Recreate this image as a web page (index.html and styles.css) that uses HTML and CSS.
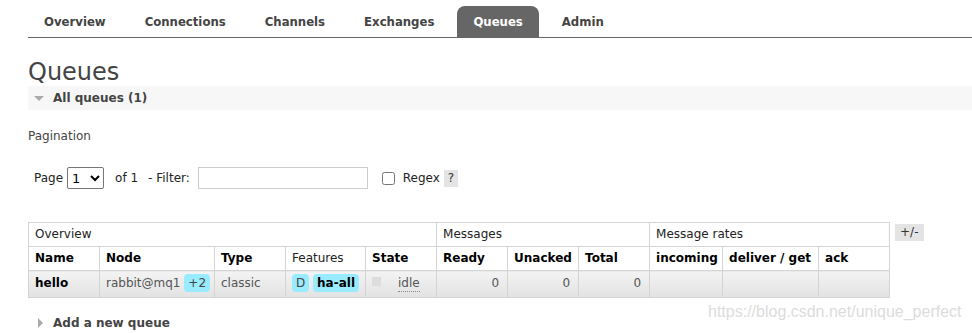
FILE: index.html
```html
<!DOCTYPE html>
<html>

<head>
    <meta charset="utf-8">
    <title>RabbitMQ Management - Queues</title>
    <link rel="stylesheet" href="styles.css">
</head>

<body>
    <div id="principal">
        <ul id="menu">
            <li><a>Overview</a></li>
            <li><a>Connections</a></li>
            <li><a>Channels</a></li>
            <li><a>Exchanges</a></li>
            <li><a class="ativo">Queues</a></li>
            <li><a>Admin</a></li>
        </ul>

        <div id="conteudo">
            <h1 id="titulo">Queues</h1>

            <div class="secao">
                <span class="seta-baixo"></span>
                <span class="secao-titulo">All queues (1)</span>
            </div>

            <div id="paginacao">
                <h3>Pagination</h3>
                <div class="filtro">
                    <label>Page</label>
                    <select id="pagina">
                        <option>1</option>
                    </select>
                    <span class="de">of 1</span>
                    <label>- Filter:</label>
                    <input type="text" id="filtro-texto">
                    <input type="checkbox" id="regex">
                    <label for="regex">Regex</label>
                    <span class="ajuda">?</span>
                </div>
            </div>

            <div id="tabela-area">
                <table id="filas">
                    <colgroup>
                        <col style="width: 71px">
                        <col style="width: 115px">
                        <col style="width: 71px">
                        <col style="width: 80px">
                        <col style="width: 71px">
                        <col style="width: 71px">
                        <col style="width: 71px">
                        <col style="width: 71px">
                        <col style="width: 73px">
                        <col style="width: 96px">
                        <col style="width: 71px">
                    </colgroup>
                    <thead>
                        <tr class="grupo">
                            <th colspan="5">Overview</th>
                            <th colspan="3">Messages</th>
                            <th colspan="3">Message rates</th>
                        </tr>
                        <tr class="colunas">
                            <th>Name</th>
                            <th>Node</th>
                            <th>Type</th>
                            <th class="normal">Features</th>
                            <th>State</th>
                            <th>Ready</th>
                            <th>Unacked</th>
                            <th>Total</th>
                            <th>incoming</th>
                            <th>deliver / get</th>
                            <th>ack</th>
                        </tr>
                    </thead>
                    <tbody>
                        <tr>
                            <td class="nome">hello</td>
                            <td>rabbit@mq1 <span class="etiqueta">+2</span></td>
                            <td>classic</td>
                            <td><span class="etiqueta">D</span> <span class="etiqueta forte">ha-all</span></td>
                            <td><span class="estado"></span><abbr>idle</abbr></td>
                            <td class="numero">0</td>
                            <td class="numero">0</td>
                            <td class="numero">0</td>
                            <td></td>
                            <td></td>
                            <td></td>
                        </tr>
                    </tbody>
                </table>
                <span class="mais-menos">+/-</span>
            </div>

            <div class="secao fechada">
                <span class="seta-direita"></span>
                <span class="secao-titulo">Add a new queue</span>
            </div>
        </div>

        <div id="marca">https://blog.csdn.net/unique_perfect</div>
    </div>
</body>

</html>
```

FILE: styles.css
```css
* {
    font-family: 'DejaVu Sans', Verdana, sans-serif;
}

body {
    margin: 0;
    background-color: #ffffff;
    color: #444444;
    font-size: 12px;
}

#principal {
    position: relative;
    height: 333px;
    overflow: hidden;
}

#menu {
    display: flex;
    list-style: none;
    margin: 6px 0 0 28px;
    padding: 0;
    border-bottom: 1px solid #666666;
}

#menu li {
    margin-right: 7px;
}

#menu a {
    display: block;
    height: 31px;
    line-height: 32px;
    padding: 0 16px;
    font-family: 'DejaVu Sans Condensed', 'DejaVu Sans', sans-serif;
    font-size: 13px;
    font-weight: bold;
    color: #444444;
    border-radius: 8px 8px 0 0;
}

#menu a.ativo {
    background-color: #666666;
    color: #ffffff;
}

#conteudo {
    padding-left: 28px;
}

#titulo {
    margin: 20px 0 0;
    font-size: 24px;
    line-height: 28px;
    font-weight: normal;
    color: #444444;
}

.secao {
    display: flex;
    align-items: center;
    height: 24px;
    padding-left: 6px;
    background-color: #f7f7f7;
}

.secao-titulo {
    font-weight: bold;
    color: #444444;
}

.seta-baixo {
    width: 0;
    height: 0;
    border-left: 5px solid transparent;
    border-right: 5px solid transparent;
    border-top: 5px solid #aaaaaa;
    margin: 1px 9px 0 0;
}

.seta-direita {
    width: 0;
    height: 0;
    border-top: 5px solid transparent;
    border-bottom: 5px solid transparent;
    border-left: 5px solid #aaaaaa;
    margin: 0 10px 0 4px;
}

.secao.fechada {
    background-color: transparent;
    margin-top: 13px;
}

#paginacao h3 {
    margin: 18px 0 0;
    font-size: 12px;
    line-height: 16px;
    font-weight: normal;
    color: #444444;
}

.filtro {
    display: flex;
    align-items: center;
    margin-top: 23px;
    padding-left: 6px;
    color: #222222;
}

#pagina {
    width: 37px;
    height: 22px;
    margin: 0 11px 0 4px;
    font-size: 13px;
    border: 1px solid #767676;
    border-radius: 2px;
    background-color: #ffffff;
}

.de {
    margin-right: 10px;
}

#filtro-texto {
    width: 170px;
    height: 22px;
    box-sizing: border-box;
    margin: 0 14px 0 8px;
    border: 1px solid #cccccc;
}

#regex {
    width: 13px;
    height: 13px;
    margin: 0 8px 0 0;
}

.ajuda {
    display: inline-block;
    width: 14px;
    height: 17px;
    line-height: 17px;
    margin-left: 4px;
    text-align: center;
    background-color: #e4e4e4;
    color: #333333;
}

#tabela-area {
    display: flex;
    align-items: flex-start;
    margin-top: 33px;
}

#filas {
    border-collapse: collapse;
    table-layout: fixed;
    width: 861px;
}

#filas th,
#filas td {
    border: 1px solid #d4d4d4;
    padding: 4px 6px;
    text-align: left;
    vertical-align: top;
    line-height: 15px;
    white-space: nowrap;
    overflow: hidden;
}

#filas tr.grupo th {
    font-weight: normal;
    color: #222222;
}

#filas tr.colunas th {
    font-weight: bold;
    color: #000000;
}

#filas tr.colunas th.normal {
    font-weight: normal;
    color: #222222;
}

#filas tbody td {
    height: 18px;
    line-height: 18px;
    padding-top: 3px;
    padding-bottom: 5px;
    color: #555555;
    background: linear-gradient(#f3f3f3, #e2e2e2);
}

#filas td.nome {
    font-weight: bold;
    color: #000000;
}

#filas td.numero {
    text-align: right;
    padding-right: 8px;
}

.etiqueta {
    display: inline-block;
    padding: 0 4px;
    line-height: 18px;
    border-radius: 4px;
    background-color: #99ebff;
    color: #444444;
}

.etiqueta.forte {
    font-weight: bold;
    color: #000000;
}

.estado {
    display: inline-block;
    width: 9px;
    height: 9px;
    margin: 3px 17px 0 0;
    vertical-align: top;
    background-color: #dddddd;
}

abbr {
    text-decoration: none;
    border-bottom: 1px dotted #888888;
    line-height: 16px;
    display: inline-block;
}

.mais-menos {
    display: inline-block;
    height: 17px;
    margin: 2px 0 0 5px;
    padding: 0 5px;
    line-height: 17px;
    background-color: #e4e4e4;
    color: #333333;
}

#marca {
    position: absolute;
    left: 708px;
    top: 303px;
    font-family: 'Liberation Sans', Arial, sans-serif;
    font-size: 16px;
    color: #dcdcdc;
    white-space: nowrap;
}
```
